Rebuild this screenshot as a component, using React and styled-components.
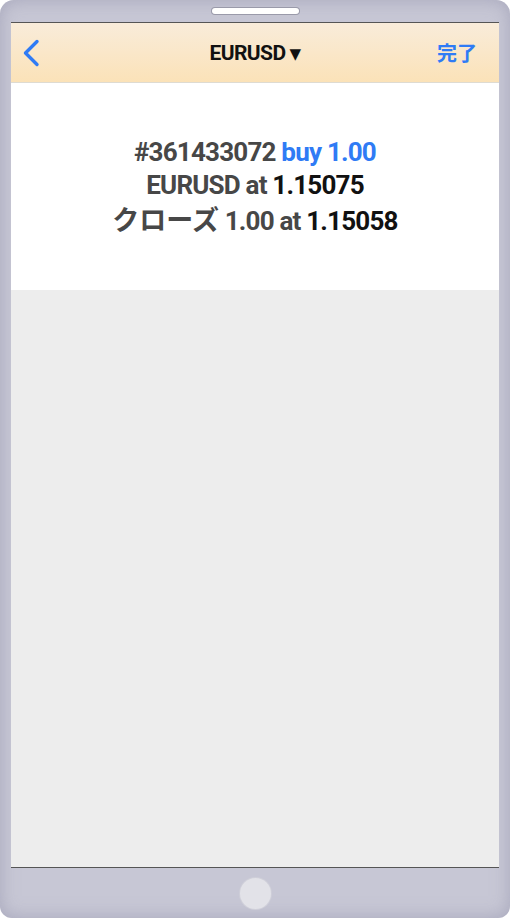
import React from "react";
import styled, { createGlobalStyle } from "styled-components";

const Global = createGlobalStyle`
  html, body {
    margin: 0;
    padding: 0;
    background: #ffffff;
  }
  body {
    font-family: Roboto, "Liberation Sans", sans-serif;
  }
`;

// 端末の枠
const Device = styled.div`
  width: 510px;
  height: 918px;
  box-sizing: border-box;
  border-radius: 14px 14px 12px 12px;
  background: #c7c7d5;
  box-shadow: inset 0 0 18px rgba(140, 140, 165, 0.55);
  display: flex;
  flex-direction: column;
  overflow: hidden;
`;

const TopBezel = styled.div`
  height: 22px;
  display: flex;
  justify-content: center;
  align-items: flex-start;
  padding-top: 8px;
  box-sizing: border-box;
`;

const Speaker = styled.div`
  width: 87px;
  height: 6px;
  border-radius: 4px;
  background: #ffffff;
  box-shadow: 0 0 0 1px #9a9aaa;
`;

const Screen = styled.div`
  flex: 1;
  margin: 0 11px;
  display: flex;
  flex-direction: column;
  border-top: 1px solid #555555;
  border-bottom: 1px solid #555555;
`;

const NavBar = styled.div`
  height: 59px;
  background: linear-gradient(to bottom, #f9ecda, #fbe2b8);
  border-bottom: 1px solid #dedbd2;
  display: grid;
  grid-template-columns: 80px 1fr 80px;
  align-items: center;
`;

const BackButton = styled.div`
  padding-left: 11px;
  display: flex;
  align-items: center;
`;

const Title = styled.div`
  text-align: center;
  font-size: 21px;
  font-weight: 700;
  color: #111111;
  letter-spacing: -0.6px;
`;

const Arrow = styled.span`
  font-family: "DejaVu Sans", sans-serif;
  font-size: 15px;
  margin-left: 4px;
  vertical-align: 1px;
`;

const DoneButton = styled.div`
  text-align: right;
  padding-right: 22px;
  font-family: "Noto Sans CJK JP", sans-serif;
  font-size: 20px;
  font-weight: 700;
  color: #2f7bf5;
`;

const Summary = styled.div`
  height: 207px;
  background: #ffffff;
  display: flex;
  flex-direction: column;
  align-items: center;
  padding-top: 53px;
  box-sizing: border-box;
`;

const Line = styled.div`
  font-size: 26px;
  line-height: 33px;
  font-weight: 700;
  color: #474747;
  letter-spacing: -0.8px;
  white-space: nowrap;
`;

const Value = styled.span`
  color: ${(p) => (p.$blue ? "#2f7bf5" : "#111111")};
`;

const Jp = styled.span`
  font-family: "Noto Sans CJK JP", sans-serif;
  font-weight: 700;
  font-size: 27px;
  letter-spacing: 0;
`;

const Empty = styled.div`
  flex: 1;
  background: #ededed;
`;

const BottomBezel = styled.div`
  height: 50px;
  display: flex;
  justify-content: center;
  align-items: center;
`;

const HomeButton = styled.div`
  width: 31px;
  height: 31px;
  border-radius: 50%;
  background: #e2e2e8;
  box-shadow: 0 0 0 1px #cfcfd9;
`;

const App = () => {
  return (
    <>
      <Global />
      <Device>
        <TopBezel>
          <Speaker />
        </TopBezel>
        <Screen>
          <NavBar>
            <BackButton>
              <svg width="18" height="28" viewBox="0 0 18 28">
                <path d="M15 2.5 L3.5 14 L15 25.5" fill="none" stroke="#2f7bf5" strokeWidth="3.4" strokeLinecap="round" strokeLinejoin="round" />
              </svg>
            </BackButton>
            <Title>
              EURUSD<Arrow>▼</Arrow>
            </Title>
            <DoneButton>完了</DoneButton>
          </NavBar>
          <Summary>
            <Line>
              #361433072 <Value $blue>buy 1.00</Value>
            </Line>
            <Line>
              EURUSD at <Value>1.15075</Value>
            </Line>
            <Line>
              <Jp>クローズ</Jp> 1.00 at <Value>1.15058</Value>
            </Line>
          </Summary>
          <Empty />
        </Screen>
        <BottomBezel>
          <HomeButton />
        </BottomBezel>
      </Device>
    </>
  );
};

export default App;
